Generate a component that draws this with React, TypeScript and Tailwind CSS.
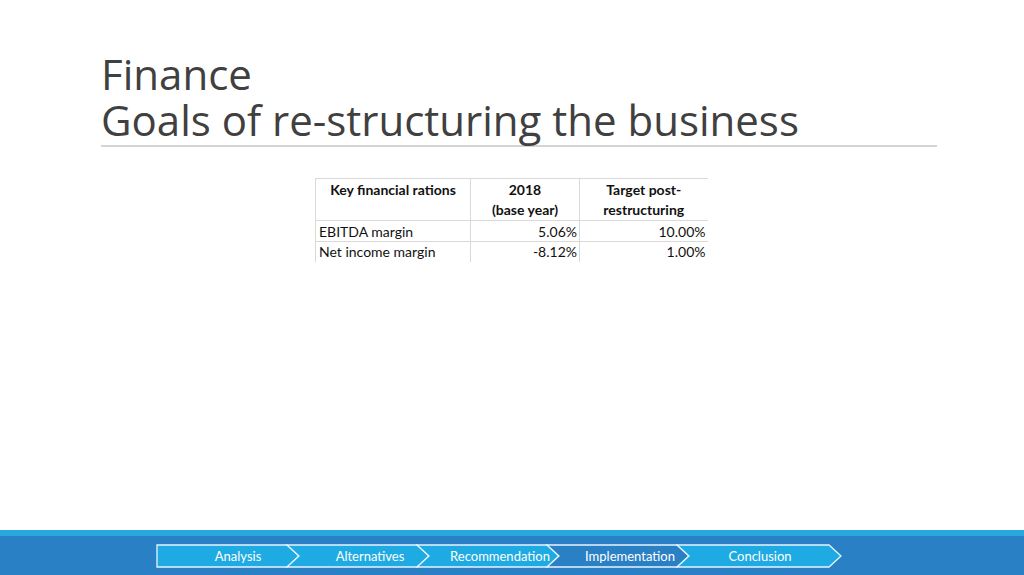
import React from "react";

const steps = [
  { label: "Analysis", x: 238, active: true },
  { label: "Alternatives", x: 370, active: true },
  { label: "Recommendation", x: 500, active: true },
  { label: "Implementation", x: 630, active: false },
  { label: "Conclusion", x: 760, active: true },
];

// chevron segments as polygon points, measured in page x coords
const segs = [
  "157,545 287,545 299,556 287,567 157,567",
  "287,545 417,545 429,556 417,567 287,567 299,556",
  "417,545 547,545 559,556 547,567 417,567 429,556",
  "547,545 677,545 689,556 677,567 547,567 559,556",
  "677,545 829,545 841,556 829,567 677,567 689,556",
];

function StepBar() {
  return (
    <svg width="1024" height="39" viewBox="0 536 1024 39" className="block">
      {segs.map((p, i) => (
        <polygon
          key={i}
          points={p}
          fill={steps[i].active ? "#1eaae2" : "#2a80c5"}
          stroke="#e6f4fb"
          strokeWidth="1.3"
          strokeLinejoin="miter"
        />
      ))}
      {steps.map((s) => (
        <text
          key={s.label}
          x={s.x}
          y={561}
          textAnchor="middle"
          fill="#ffffff"
          fontSize="13"
          fontFamily="Lato, 'Open Sans', sans-serif"
        >
          {s.label}
        </text>
      ))}
    </svg>
  );
}

export default function App() {
  return (
    <div className="w-[1024px] h-[575px] bg-white flex flex-col overflow-hidden font-['Lato',sans-serif]">
      <div className="flex-1 pl-[101px] pt-[51px]">
        <h1 className="font-['Open_Sans',sans-serif] text-[42px] leading-[46px] text-[#404040] font-normal">
          Finance
          <br />
          Goals of re-structuring the business
        </h1>
        <div className="mt-[2px] w-[836px] h-[2px] bg-[#d4d4d4]" />

        <div className="ml-[214px] mt-[31px]">
          <table className="border-collapse text-[14px] text-[#111] leading-[20px]">
            <thead>
              <tr className="align-top">
                <th className="w-[155px] h-[41px] border-l border-t border-[#d9d9d9] font-bold text-center pt-[1px]">
                  Key financial rations
                </th>
                <th className="w-[109px] border-l border-t border-[#d9d9d9] font-bold text-center pt-[1px]">
                  2018
                  <br />
                  (base year)
                </th>
                <th className="w-[128px] border-l border-t border-[#d9d9d9] font-bold text-center pt-[1px]">
                  Target post-
                  <br />
                  restructuring
                </th>
              </tr>
            </thead>
            <tbody>
              <tr className="h-[21px]">
                <td className="border-l border-t border-[#d9d9d9] pl-[3px] leading-[19px]">EBITDA margin</td>
                <td className="border-l border-t border-[#d9d9d9] text-right pr-[2px] leading-[19px]">5.06%</td>
                <td className="border-l border-t border-[#d9d9d9] text-right pr-[2px] leading-[19px]">10.00%</td>
              </tr>
              <tr className="h-[20px]">
                <td className="border-l border-t border-[#d9d9d9] pl-[3px] leading-[19px]">Net income margin</td>
                <td className="border-l border-t border-[#d9d9d9] text-right pr-[2px] leading-[19px]">-8.12%</td>
                <td className="border-l border-t border-[#d9d9d9] text-right pr-[2px] leading-[19px]">1.00%</td>
              </tr>
            </tbody>
          </table>
        </div>
      </div>

      <div className="h-[45px] flex flex-col">
        <div className="h-[6px] bg-[#2aa8de]" />
        <div className="flex-1 bg-[#2a80c5]">
          <StepBar />
        </div>
      </div>
    </div>
  );
}
